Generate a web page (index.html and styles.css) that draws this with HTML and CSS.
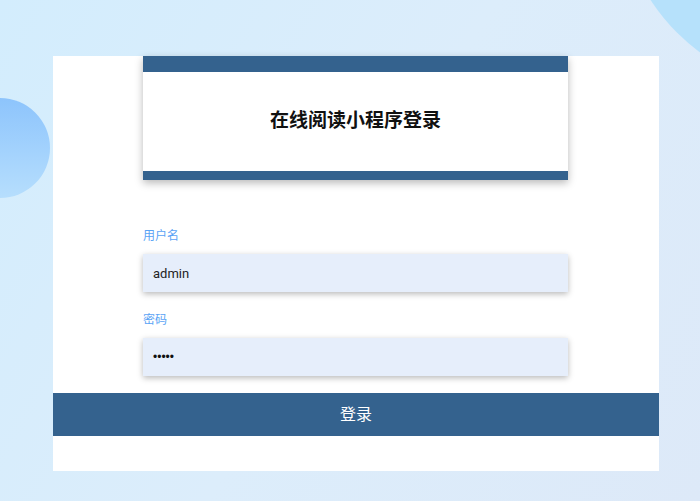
FILE: index.html
```html
<!DOCTYPE html>
<html lang="zh-CN">
<head>
<meta charset="utf-8">
<title>在线阅读小程序登录</title>
<link rel="stylesheet" href="styles.css">
</head>
<body>
<div class="backdrop">
  <div class="bubble bubble-left"></div>
  <div class="bubble bubble-right"></div>
</div>
<main class="panel">
  <div class="inner">
    <div class="header-card">
      <h1 class="title">在线阅读小程序登录</h1>
    </div>
    <form class="form">
      <label class="label">用户名</label>
      <div class="field">admin</div>
      <label class="label label-second">密码</label>
      <div class="field field-pass">•••••</div>
    </form>
  </div>
  <button class="login-btn" type="button">登录</button>
</main>
</body>
</html>
```

FILE: styles.css
```css
html, body {
  margin: 0;
  padding: 0;
}
body {
  width: 700px;
  height: 501px;
  overflow: hidden;
  position: relative;
  font-family: "Noto Sans CJK SC", "Noto Sans", sans-serif;
  background: linear-gradient(120deg, #d3edfd 0%, #dcedfb 50%, #dde9f8 100%);
  padding-top: 56px;
  box-sizing: border-box;
}
.backdrop {
  position: absolute;
  left: 0;
  top: 0;
  width: 700px;
  height: 501px;
  overflow: hidden;
}
.bubble {
  position: absolute;
  border-radius: 50%;
}
.bubble-left {
  left: -50px;
  top: 98px;
  width: 100px;
  height: 100px;
  background: linear-gradient(180deg, #8dc4fc 0%, #a6d4fd 60%, #b6defd 100%);
}
.bubble-right {
  left: 618px;
  top: -312px;
  width: 404px;
  height: 404px;
  background: #b6e1fb;
}
.panel {
  position: relative;
  margin-left: 53px;
  width: 606px;
  height: 415px;
  background: #ffffff;
  display: flex;
  flex-direction: column;
}
.inner {
  margin-left: 90px;
  width: 425px;
}
.header-card {
  height: 124px;
  box-sizing: border-box;
  border-top: 16px solid #34628e;
  border-bottom: 9px solid #34628e;
  box-shadow: 0 3px 8px rgba(0, 0, 0, 0.28);
  display: flex;
  align-items: center;
  justify-content: center;
}
.title {
  margin: 0;
  font-size: 19px;
  font-weight: 700;
  color: #111;
  line-height: 24px;
  position: relative;
  top: -3px;
}
.form {
  display: flex;
  flex-direction: column;
  margin-top: 47px;
}
.label {
  font-size: 12px;
  line-height: 16px;
  color: #5aa3f5;
  margin-bottom: 11px;
}
.label-second {
  margin-top: 19px;
}
.field {
  height: 38px;
  box-sizing: border-box;
  background: #e6eefb;
  padding-left: 10px;
  display: flex;
  align-items: center;
  font-family: "Roboto", "Noto Sans", sans-serif;
  font-size: 13px;
  color: #222;
  box-shadow: 0 2px 6px rgba(0, 0, 0, 0.28);
}
.field-pass {
  font-family: "Liberation Sans", sans-serif;
  font-size: 12px;
  color: #111;
}
.login-btn {
  margin-top: 17px;
  height: 43px;
  width: 606px;
  border: none;
  background: #34628e;
  color: #ffffff;
  font-family: "Noto Sans CJK SC", sans-serif;
  font-size: 16px;
  line-height: 20px;
  padding: 0 0 3px 0;
  cursor: pointer;
}
```
